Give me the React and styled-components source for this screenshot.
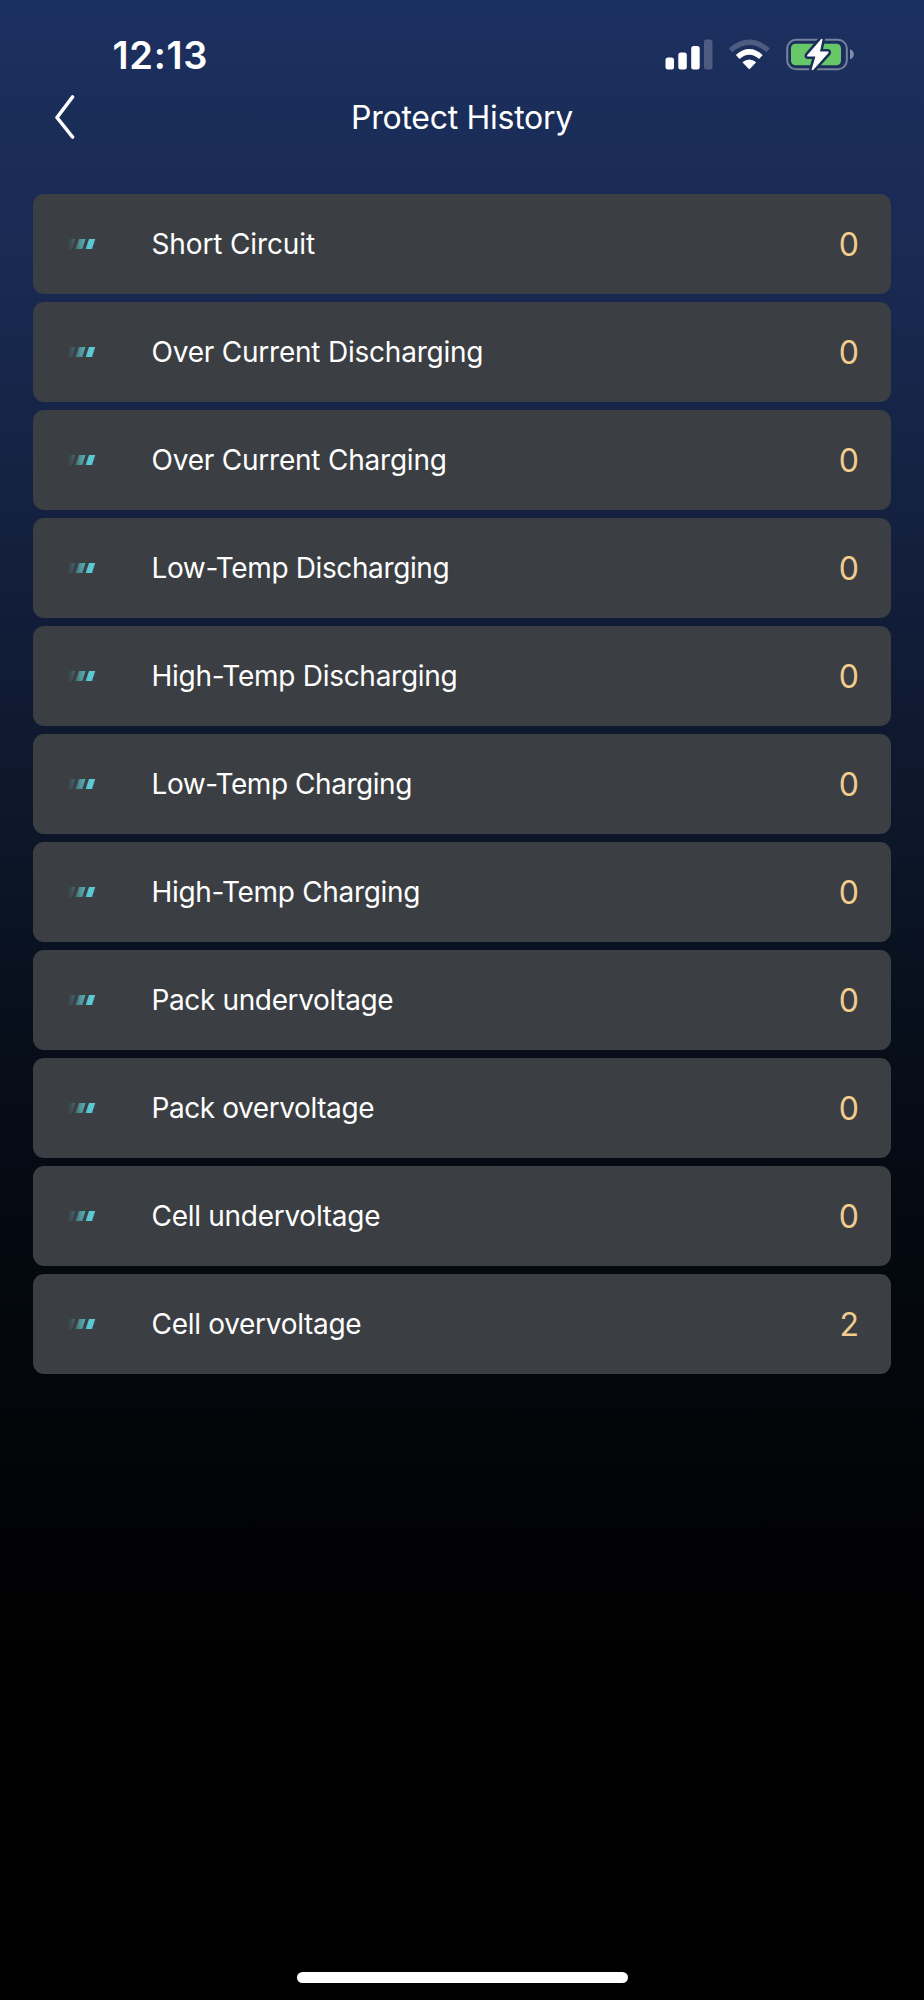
import React from "react";
import styled, { createGlobalStyle } from "styled-components";

const GlobalStyle = createGlobalStyle`
  * { box-sizing: border-box; }
  body { margin: 0; background: #000; }
`;

const Screen = styled.main`
  display: flex;
  flex-direction: column;
  width: 924px;
  height: 2000px;
  color: #fff;
  font-family: Inter, "Liberation Sans", sans-serif;
  background: linear-gradient(
    180deg,
    #1c3060 0,
    #1a2c57 150px,
    #192a53 250px,
    #162446 420px,
    #111d38 620px,
    #0d172a 820px,
    #08101d 1000px,
    #050a13 1180px,
    #03070b 1380px,
    #020305 1500px,
    #010102 1650px,
    #000 1720px
  );
`;

const StatusBar = styled.div`
  display: flex;
  justify-content: space-between;
  height: 84px;
  padding: 0 69px 0 112.5px;
`;

const Time = styled.span`
  padding-top: 32px;
  font-size: 38px;
  line-height: 46px;
  font-weight: 600;
  letter-spacing: 0.7px;
`;

const StatusIcons = styled.svg`
  display: block;
  width: 190px;
  height: 40px;
  margin-top: 35px;
`;

const Header = styled.header`
  display: grid;
  grid-template-columns: 150px 1fr 150px;
  align-items: center;
  height: 66px;
`;

const BackButton = styled.button`
  display: flex;
  padding: 0 0 0 53px;
  border: 0;
  background: none;
  color: inherit;
`;

const Title = styled.h1`
  margin: 1px 0 0;
  text-align: center;
  font-size: 32px;
  line-height: 40px;
  font-weight: 400;
  letter-spacing: -0.28px;
`;

const List = styled.ul`
  display: flex;
  flex-direction: column;
  gap: 8px;
  margin: 44px 33px 0;
  padding: 0;
  list-style: none;
`;

const Row = styled.li`
  display: flex;
  align-items: center;
  height: 100px;
  padding: 0 32px 0 34px;
  border-radius: 11px;
  background: #3b3e42;
`;

const Label = styled.span`
  flex: 1;
  margin-left: 55.5px;
  font-size: 28px;
  line-height: 36px;
  letter-spacing: ${({ $tracking }) => $tracking}px;
`;

const Count = styled.span`
  padding-top: 1px;
  font-size: 32px;
  line-height: 40px;
  color: #f2cc8e;
`;

const HomeIndicator = styled.div`
  width: 331px;
  height: 11px;
  margin: auto auto 17px;
  border-radius: 6px;
  background: #fff;
`;

const events = [
  { name: "Short Circuit", count: 0, tracking: -0.13 },
  { name: "Over Current Discharging", count: 0, tracking: -0.22 },
  { name: "Over Current Charging", count: 0, tracking: -0.22 },
  { name: "Low-Temp Discharging", count: 0, tracking: -0.38 },
  { name: "High-Temp Discharging", count: 0, tracking: -0.27 },
  { name: "Low-Temp Charging", count: 0, tracking: -0.45 },
  { name: "High-Temp Charging", count: 0, tracking: -0.32 },
  { name: "Pack undervoltage", count: 0, tracking: -0.37 },
  { name: "Pack overvoltage", count: 0, tracking: -0.42 },
  { name: "Cell undervoltage", count: 0, tracking: -0.28 },
  { name: "Cell overvoltage", count: 2, tracking: -0.3 },
];

function Marker() {
  return (
    <svg width="29" height="10" viewBox="0 0 29 10">
      <defs>
        <linearGradient id="fade" gradientUnits="userSpaceOnUse" x1="0" y1="0" x2="28" y2="0">
          <stop offset="0" stopColor="#5bcbd5" stopOpacity="0" />
          <stop offset="0.12" stopColor="#5bcbd5" stopOpacity="0.08" />
          <stop offset="0.28" stopColor="#5bcbd5" stopOpacity="0.32" />
          <stop offset="0.75" stopColor="#5bcbd5" stopOpacity="0.97" />
          <stop offset="1" stopColor="#5bcbd5" />
        </linearGradient>
      </defs>
      <path
        fill="url(#fade)"
        d="M2.5 0H8L5 10H0ZM12 0H18.4L15.2 10H8.6ZM22 0H28.2L25 10H18.6Z"
      />
    </svg>
  );
}

function Indicators() {
  return (
    <StatusIcons viewBox="665 35 190 40" fill="#fff">
      <rect x="665.5" y="57.5" width="8.5" height="12" rx="2.5" />
      <rect x="678.3" y="52.5" width="8.5" height="17" rx="2.5" />
      <rect x="691.2" y="46" width="8.5" height="23.5" rx="2.5" />
      <rect x="704" y="39.5" width="8.5" height="30" rx="2.5" opacity="0.22" />
      <path
        d="M730.5 50.2Q749.3 34.4 768.1 50.2"
        fill="none"
        stroke="#fff"
        strokeWidth="5.2"
        opacity="0.22"
      />
      <path d="M737.7 57Q749.3 46.8 760.9 57" fill="none" stroke="#fff" strokeWidth="5.4" />
      <path d="M742.4 62.2Q749.3 57 756.2 62.2L750 68.8Q749.3 69.5 748.6 68.8Z" />
      <rect
        x="787.2"
        y="39.8"
        width="59.6"
        height="29.4"
        rx="8.8"
        fill="none"
        stroke="#fff"
        strokeOpacity="0.4"
        strokeWidth="2"
      />
      <path d="M850 49.3Q853.8 50.6 853.8 54.2Q853.8 57.8 850 59.3Z" opacity="0.45" />
      <rect x="791" y="43.8" width="50" height="21.4" rx="4.5" fill="#66c767" />
      <path
        d="M821.2 39L807.2 55.2Q806.4 56.5 808 56.5H815.4L811.6 69.4Q812 70.8 813.4 69.8L828.4 53Q829.2 51.6 827.6 51.6H820L822.5 39.4Q822.3 38.3 821.2 39Z"
        stroke="#1c2f5b"
        strokeWidth="5"
        strokeLinejoin="round"
        paintOrder="stroke"
      />
    </StatusIcons>
  );
}

export default function App() {
  return (
    <Screen>
      <GlobalStyle />
      <StatusBar>
        <Time>12:13</Time>
        <Indicators />
      </StatusBar>
      <Header>
        <BackButton aria-label="Back">
          <svg width="23" height="44" viewBox="0 0 23 44" fill="none" stroke="#fff" strokeWidth="3.6" strokeLinecap="round" strokeLinejoin="round">
            <path d="M19.5 2L4 22.5L19.5 42" />
          </svg>
        </BackButton>
        <Title>Protect History</Title>
      </Header>
      <List>
        {events.map(({ name, count, tracking }) => (
          <Row key={name}>
            <Marker />
            <Label $tracking={tracking}>{name}</Label>
            <Count>{count}</Count>
          </Row>
        ))}
      </List>
      <HomeIndicator />
    </Screen>
  );
}
